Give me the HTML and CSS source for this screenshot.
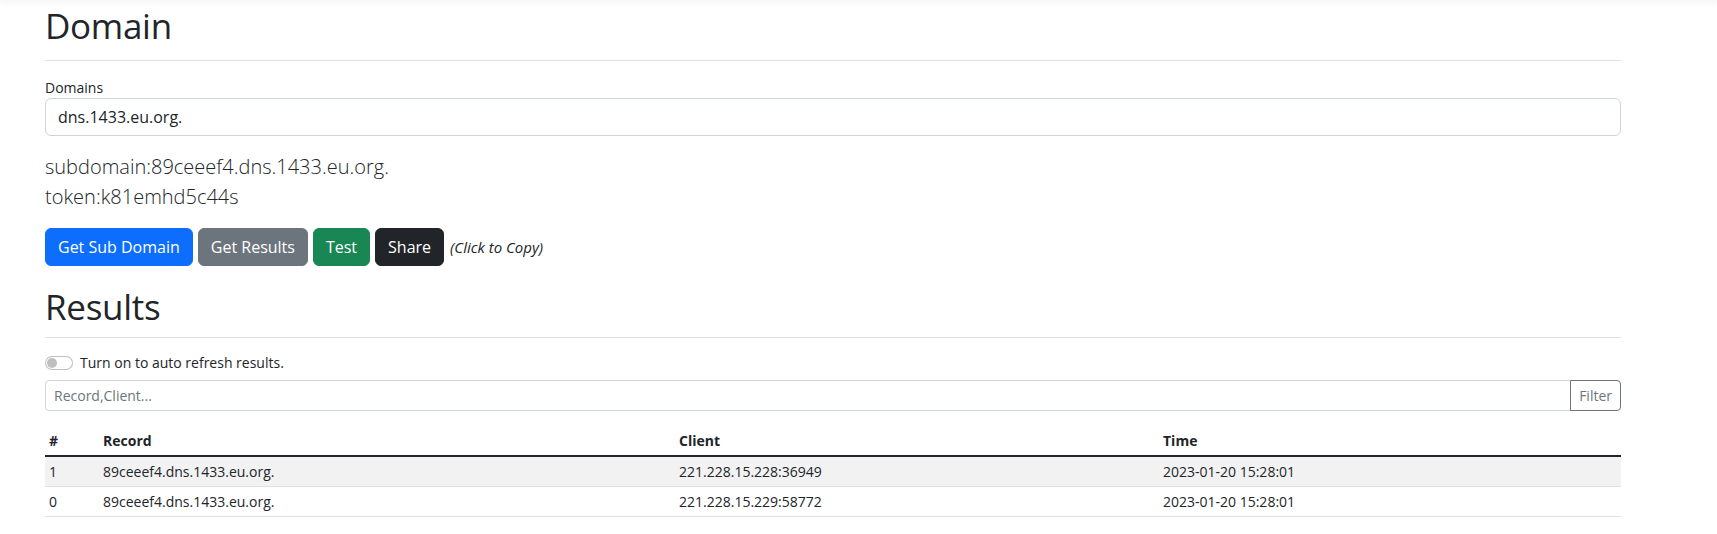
FILE: index.html
```html
<!DOCTYPE html>
<html lang="en">
<head>
<meta charset="utf-8">
<title>DNS Log</title>
<link rel="stylesheet" href="styles.css">
</head>
<body>
<div class="topbar"></div>
<main class="container">
  <section class="domain">
    <h1 class="title title-domain">Domain</h1>
    <label class="field-label" for="domains">Domains</label>
    <input class="form-control" id="domains" type="text" value="dns.1433.eu.org.">
    <p class="lead">subdomain:89ceeef4.dns.1433.eu.org.<br>token:k81emhd5c44s</p>
    <div class="actions">
      <button class="btn btn-primary" type="button">Get Sub Domain</button>
      <button class="btn btn-secondary" type="button">Get Results</button>
      <button class="btn btn-success" type="button">Test</button>
      <button class="btn btn-dark" type="button">Share</button>
      <em class="hint">(Click to Copy)</em>
    </div>
  </section>
  <section class="results">
    <h1 class="title title-results">Results</h1>
    <div class="switch-row">
      <span class="switch"><span class="knob"></span></span>
      <span class="switch-label">Turn on to auto refresh results.</span>
    </div>
    <div class="filter-group">
      <input class="filter-input" type="text" placeholder="Record,Client...">
      <button class="filter-btn" type="button">Filter</button>
    </div>
    <table class="log-table">
      <colgroup>
        <col class="c-idx">
        <col class="c-record">
        <col class="c-client">
        <col class="c-time">
      </colgroup>
      <thead>
        <tr><th>#</th><th>Record</th><th>Client</th><th>Time</th></tr>
      </thead>
      <tbody>
        <tr class="striped"><td>1</td><td>89ceeef4.dns.1433.eu.org.</td><td>221.228.15.228:36949</td><td>2023-01-20 15:28:01</td></tr>
        <tr><td>0</td><td>89ceeef4.dns.1433.eu.org.</td><td>221.228.15.229:58772</td><td>2023-01-20 15:28:01</td></tr>
      </tbody>
    </table>
  </section>
</main>
</body>
</html>
```
FILE: styles.css
```css
* { box-sizing: border-box; }

html, body {
  margin: 0;
  padding: 0;
  background: #fff;
}

body {
  font-family: "Segoe UI", "Open Sans", "Noto Sans", sans-serif;
  color: #212529;
  font-size: 16px;
  line-height: 1.5;
}

.topbar {
  height: 0;
  box-shadow: 0 0 6px 2px rgba(0, 0, 0, 0.07);
}

.container {
  width: 1576px;
  margin-left: 45px;
}

.title {
  margin: 0;
  padding-top: 2px;
  font-size: 35px;
  font-weight: 400;
  letter-spacing: -0.3px;
  line-height: 48px;
  border-bottom: 1px solid #dee2e6;
}

.title-domain {
  padding-bottom: 10px;
}

.title-results {
  margin-top: 15px;
  padding-bottom: 6px;
}

.field-label {
  display: block;
  margin-top: 16px;
  font-size: 14px;
  line-height: 21px;
}

.form-control {
  display: block;
  width: 100%;
  height: 38px;
  padding: 6px 12px;
  font-family: inherit;
  font-size: 16px;
  line-height: 24px;
  color: #212529;
  border: 1px solid #ced4da;
  border-radius: 6px;
  background: #fff;
  outline: none;
}

.lead {
  margin: 16px 0 0;
  font-size: 20px;
  font-weight: 300;
  line-height: 30px;
}

.actions {
  margin-top: 16px;
  display: flex;
  align-items: baseline;
  gap: 5px;
}

.btn {
  font-family: inherit;
  font-size: 16px;
  line-height: 24px;
  padding: 6px 12px;
  border: 1px solid transparent;
  border-radius: 6px;
  color: #fff;
  cursor: pointer;
}

.btn-primary { background: #0d6efd; border-color: #0d6efd; }
.btn-secondary { background: #6c757d; border-color: #6c757d; }
.btn-success { background: #198754; border-color: #198754; }
.btn-dark { background: #212529; border-color: #212529; }

.hint {
  font-size: 15px;
  margin-left: 1px;
}

.switch-row {
  margin-top: 14px;
  display: flex;
  align-items: center;
  gap: 7px;
  font-size: 14px;
  line-height: 21px;
}

.switch {
  display: inline-flex;
  align-items: center;
  width: 28px;
  height: 14px;
  padding: 0 1px;
  border: 1px solid rgba(0, 0, 0, 0.25);
  border-radius: 14px;
  background: #fff;
}

.knob {
  width: 10px;
  height: 10px;
  border-radius: 50%;
  background: #bfbfbf;
}

.filter-group {
  margin-top: 7px;
  display: flex;
}

.filter-input {
  flex: 1;
  height: 31px;
  padding: 4px 8px;
  font-family: inherit;
  font-size: 14px;
  line-height: 21px;
  color: #212529;
  border: 1px solid #ced4da;
  border-radius: 4px 0 0 4px;
  outline: none;
}

.filter-input::placeholder {
  color: #6c757d;
}

.filter-btn {
  height: 31px;
  padding: 4px 8px;
  font-family: inherit;
  font-size: 14px;
  line-height: 21px;
  color: #6c757d;
  background: #fff;
  border: 1px solid #6c757d;
  border-radius: 0 4px 4px 0;
  margin-left: -1px;
}

.log-table {
  margin-top: 15px;
  width: 100%;
  table-layout: fixed;
  border-collapse: collapse;
  font-size: 14px;
  line-height: 21px;
}

.c-idx { width: 54px; }
.c-record { width: 576px; }
.c-client { width: 484px; }
.c-time { width: 462px; }

.log-table th,
.log-table td {
  padding: 4px;
  text-align: left;
  vertical-align: top;
}

.log-table th {
  font-weight: 700;
  border-bottom: 2px solid #212529;
}

.log-table td {
  border-bottom: 1px solid #dee2e6;
}

.log-table tr.striped td {
  background: #f2f2f2;
}
```
